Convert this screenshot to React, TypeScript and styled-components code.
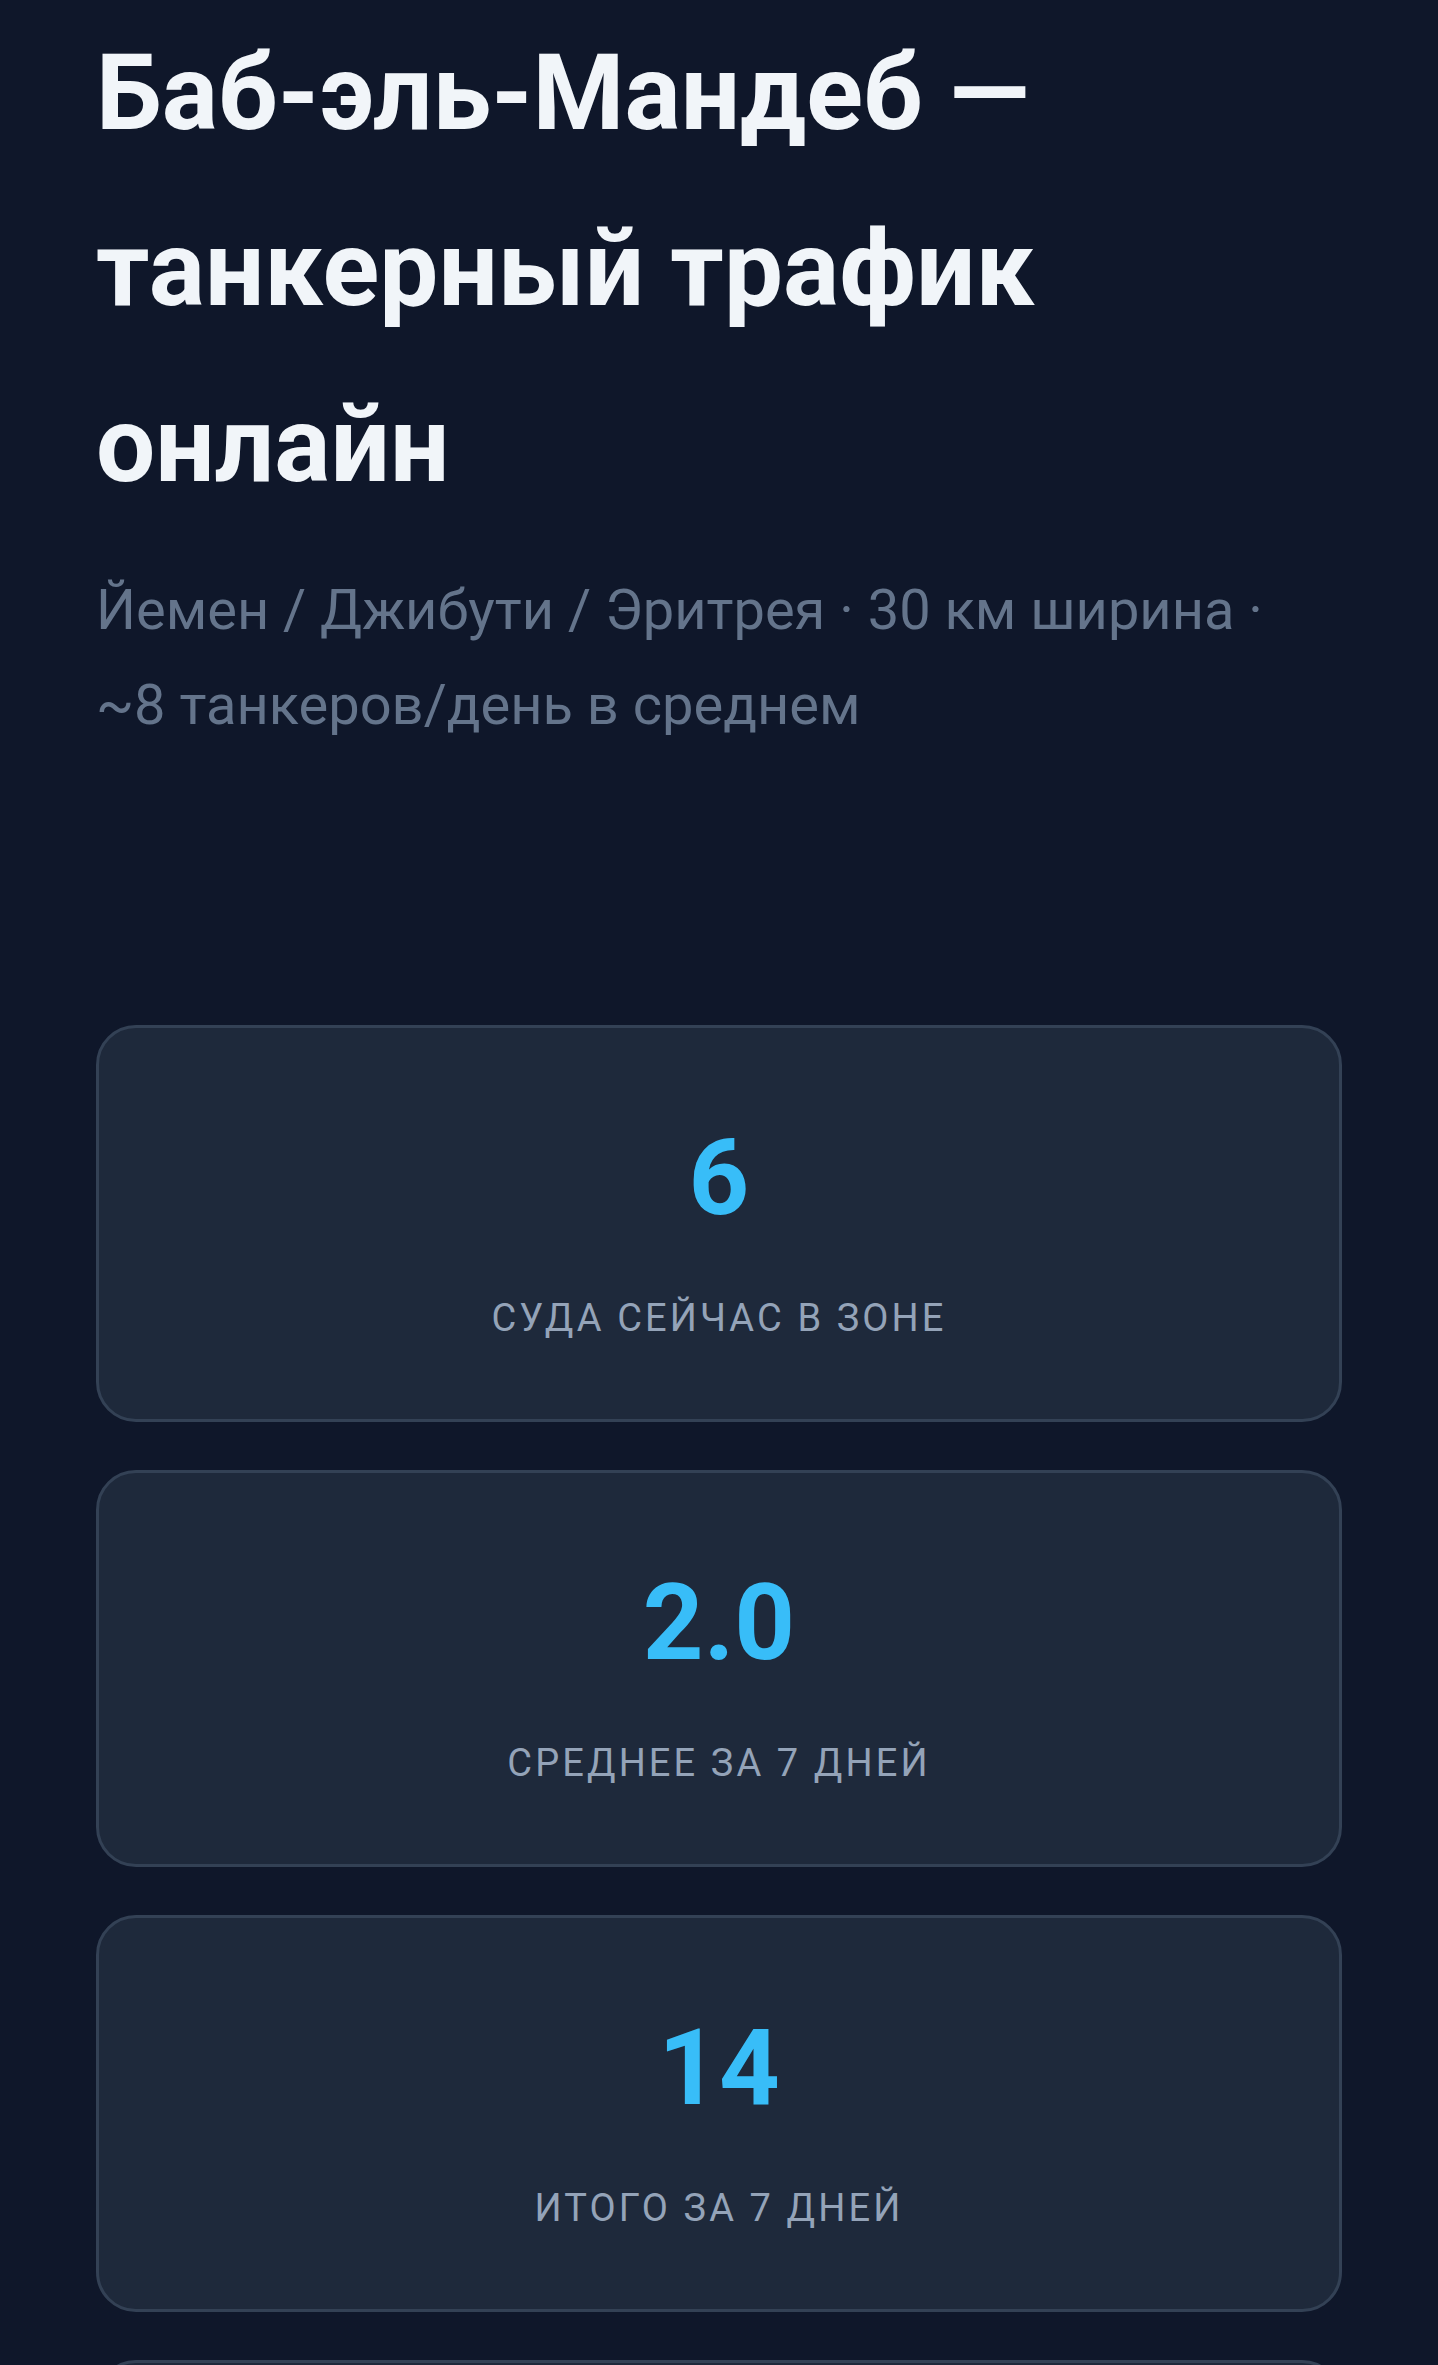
import styled, { createGlobalStyle } from "styled-components";

const GlobalStyle = createGlobalStyle`
  * {
    box-sizing: border-box;
  }

  body {
    margin: 0;
    background: #0f172a;
    font-family: Roboto, "Noto Sans", sans-serif;
  }
`;

const stats = [
  { value: "6", label: "Суда сейчас в зоне" },
  { value: "2.0", label: "Среднее за 7 дней" },
  { value: "14", label: "Итого за 7 дней" },
];

export default function App() {
  return (
    <>
      <GlobalStyle />
      <Page>
        <Header>
          <Title>Баб-эль-Мандеб — танкерный трафик онлайн</Title>
          <Subtitle>
            Йемен / Джибути / Эритрея · 30 км ширина · ~8 танкеров/день в
            среднем
          </Subtitle>
        </Header>
        <Stats>
          {stats.map((s) => (
            <StatCard key={s.label}>
              <StatValue>{s.value}</StatValue>
              <StatLabel>{s.label}</StatLabel>
            </StatCard>
          ))}
          <StatCard />
        </Stats>
      </Page>
    </>
  );
}

const Page = styled.main`
  min-height: 100vh;
  padding: 6px 96px 0;
  background: #0f172a;
`;

const Header = styled.header`
  margin-bottom: 272px;
`;

const Title = styled.h1`
  margin: 0 0 29px;
  font-size: 105px;
  line-height: 176px;
  font-weight: 700;
  color: #f1f5f9;
`;

const Subtitle = styled.p`
  margin: 0;
  font-size: 56px;
  line-height: 95px;
  color: #64748b;
`;

const Stats = styled.section`
  display: flex;
  flex-direction: column;
  gap: 48px;
`;

const StatCard = styled.div`
  display: flex;
  flex-direction: column;
  align-items: center;
  min-height: 395px;
  padding: 87px 24px 72px;
  background: #1e293b;
  border: 3px solid #334155;
  border-radius: 40px;
`;

const StatValue = styled.div`
  margin-bottom: 48px;
  font-size: 106px;
  line-height: 127px;
  font-weight: 700;
  color: #38bdf8;
`;

const StatLabel = styled.div`
  font-size: 38px;
  line-height: 57px;
  letter-spacing: 3.1px;
  text-transform: uppercase;
  color: #94a3b8;
`;
